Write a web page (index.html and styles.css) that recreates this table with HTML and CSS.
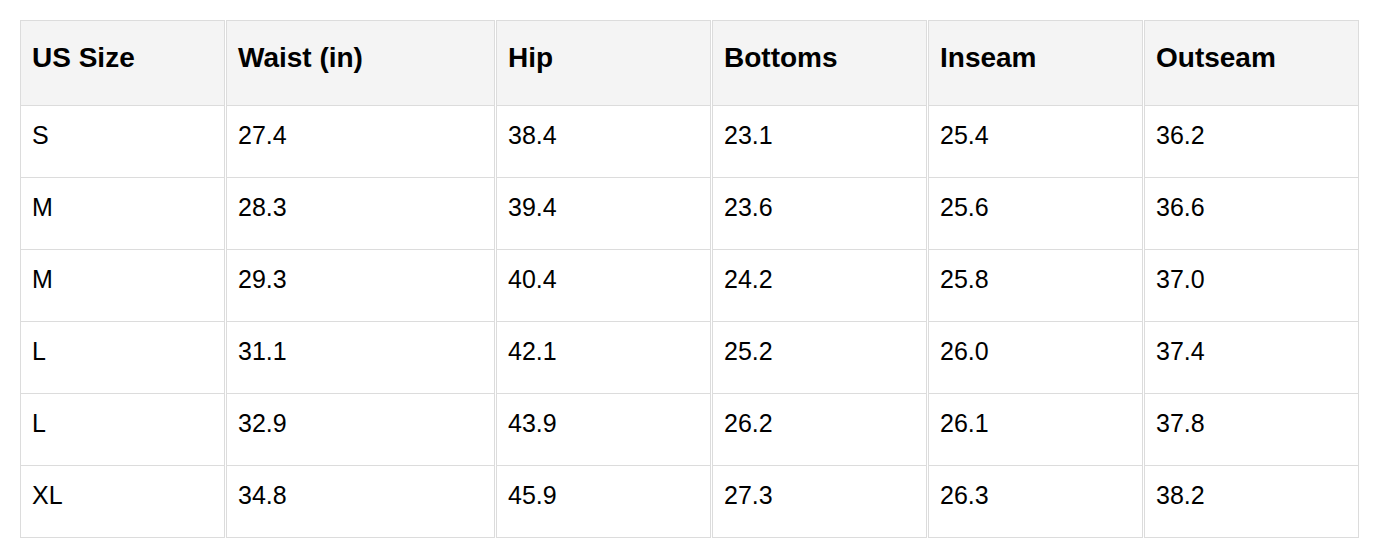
FILE: index.html
```html
<!DOCTYPE html>
<html>
<head>
<meta charset="utf-8">
<link rel="stylesheet" href="styles.css">
</head>
<body>
<table class="size-table">
  <thead>
    <tr>
      <th class="c1">US Size</th>
      <th class="c2">Waist (in)</th>
      <th class="c3">Hip</th>
      <th class="c3">Bottoms</th>
      <th class="c3">Inseam</th>
      <th class="c3">Outseam</th>
    </tr>
  </thead>
  <tbody>
    <tr><td>S</td><td>27.4</td><td>38.4</td><td>23.1</td><td>25.4</td><td>36.2</td></tr>
    <tr><td>M</td><td>28.3</td><td>39.4</td><td>23.6</td><td>25.6</td><td>36.6</td></tr>
    <tr><td>M</td><td>29.3</td><td>40.4</td><td>24.2</td><td>25.8</td><td>37.0</td></tr>
    <tr><td>L</td><td>31.1</td><td>42.1</td><td>25.2</td><td>26.0</td><td>37.4</td></tr>
    <tr><td>L</td><td>32.9</td><td>43.9</td><td>26.2</td><td>26.1</td><td>37.8</td></tr>
    <tr><td>XL</td><td>34.8</td><td>45.9</td><td>27.3</td><td>26.3</td><td>38.2</td></tr>
  </tbody>
</table>
</body>
</html>
```

FILE: styles.css
```css
html, body {
  margin: 0;
  padding: 0;
  background: #ffffff;
}

body {
  font-family: "Liberation Sans", Arial, sans-serif;
  color: #000;
}

.size-table {
  margin: 20px 0 0 19px;
  width: 1341px;
  table-layout: fixed;
  border-collapse: separate;
  border-spacing: 1px 0;
}

.size-table th,
.size-table td {
  box-sizing: border-box;
  text-align: left;
  vertical-align: top;
  border-left: 1px solid #dcdcdc;
  border-right: 1px solid #dcdcdc;
  border-bottom: 1px solid #dcdcdc;
  padding-left: 11px;
  padding-right: 11px;
}

.size-table th {
  background: #f4f4f4;
  border-top: 1px solid #dcdcdc;
  font-size: 28px;
  font-weight: bold;
  line-height: 32px;
  height: 86px;
  padding-top: 21px;
  padding-bottom: 31px;
}

.size-table td {
  font-size: 25px;
  font-weight: normal;
  line-height: 28px;
  height: 72px;
  padding-top: 15px;
  padding-bottom: 28px;
}

.size-table .c1 { width: 205px; }
.size-table .c2 { width: 269px; }
.size-table .c3 { width: 215px; }
```
